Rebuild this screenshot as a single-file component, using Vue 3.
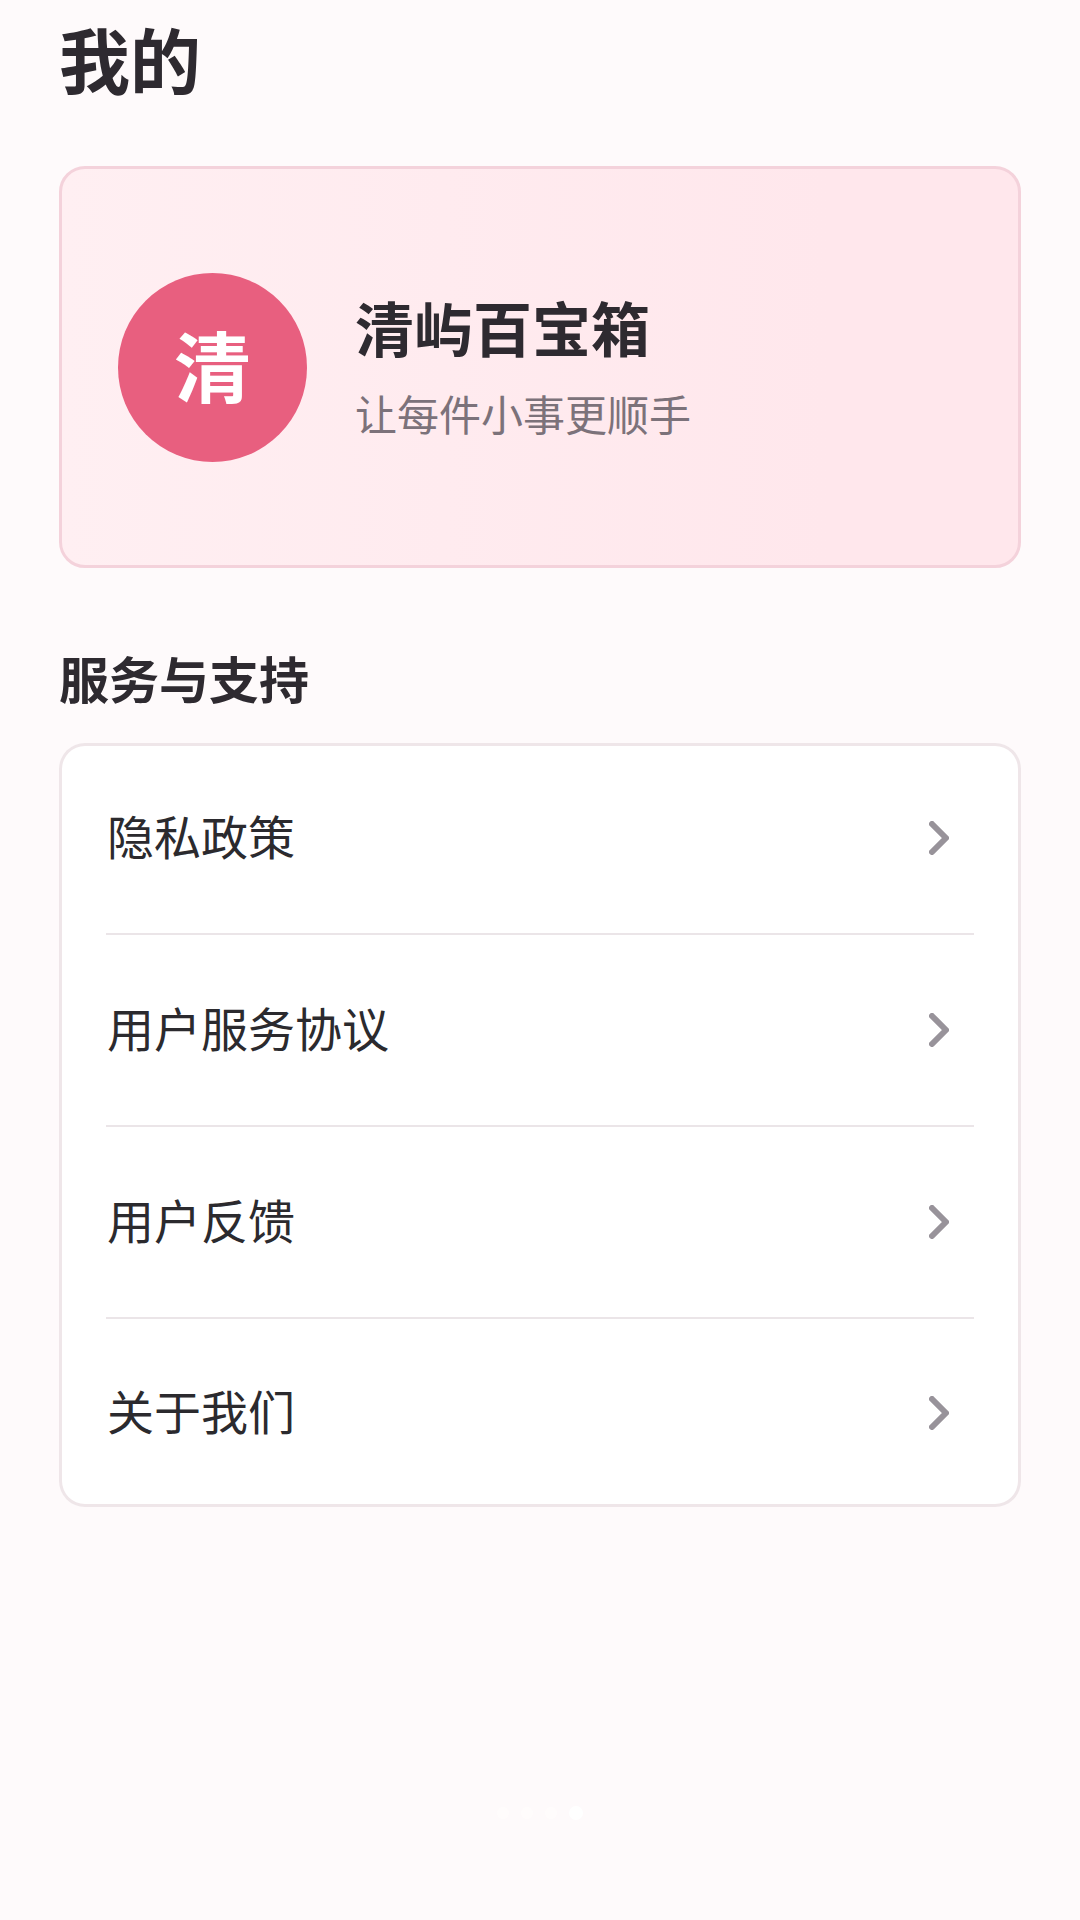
<script setup>
const links = ['隐私政策', '用户服务协议', '用户反馈', '关于我们']
const pages = 4
</script>

<template>
  <main class="page">
    <h1 class="title">我的</h1>

    <section class="profile">
      <div class="avatar">清</div>
      <div class="about">
        <h2 class="name">清屿百宝箱</h2>
        <p class="slogan">让每件小事更顺手</p>
      </div>
    </section>

    <h2 class="heading">服务与支持</h2>
    <nav class="list">
      <a v-for="link in links" :key="link" class="row" href="#">
        <span class="label">{{ link }}</span>
        <svg class="chevron" viewBox="0 0 20 34" aria-hidden="true">
          <path d="M3 3 L17 17 L3 31" />
        </svg>
      </a>
    </nav>

    <div class="dots" aria-hidden="true">
      <span v-for="n in pages" :key="n" class="dot" :class="{ active: n === pages }"></span>
    </div>
  </main>
</template>

<style>
body {
  margin: 0;
  background: #fefafb;
}
</style>

<style scoped>
.page {
  box-sizing: border-box;
  min-height: 100vh;
  padding: 7px 59px 100px;
  display: flex;
  flex-direction: column;
  color: #2e2a30;
  font-family: "Noto Sans CJK SC", sans-serif;
}

h1,
h2,
p {
  margin: 0;
}

.title {
  margin-bottom: 59px;
  font-size: 71px;
  line-height: 100px;
  font-weight: 700;
}

.profile {
  box-sizing: border-box;
  min-height: 402px;
  padding: 56px;
  display: flex;
  align-items: center;
  gap: 48px;
  border: 3px solid #f4d2db;
  border-radius: 26px;
  background: linear-gradient(90deg, #ffeff2, #ffe7ec 80%);
}

.avatar {
  box-sizing: border-box;
  flex: none;
  width: 189px;
  height: 189px;
  padding-bottom: 6px;
  display: flex;
  align-items: center;
  justify-content: center;
  border-radius: 50%;
  background: #e85f7f;
  color: #fff;
  font-size: 77px;
  font-weight: 700;
  line-height: 100px;
}

.about {
  display: flex;
  flex-direction: column;
  gap: 20px;
}

.name {
  font-size: 59px;
  line-height: 72px;
  font-weight: 700;
}

.slogan {
  color: #7c727a;
  font-size: 42px;
  line-height: 60px;
}

.heading {
  margin: 73px 0 30px;
  font-size: 50px;
  line-height: 72px;
  font-weight: 700;
}

.list {
  padding: 0 47px;
  border-radius: 26px;
  background: #fff;
  box-shadow: inset 0 0 0 3px #efe6e9;
}

.row {
  box-sizing: border-box;
  height: 192px;
  padding: 0 25px 0 1px;
  display: flex;
  align-items: center;
  justify-content: space-between;
  border-bottom: 2px solid #ebe5e8;
  color: #2b2a2e;
  font-size: 47px;
  line-height: 72px;
  text-decoration: none;
}

.row:last-child {
  height: 188px;
  border-bottom: none;
}

.label {
  padding-bottom: 6px;
}

.chevron {
  width: 20px;
  height: 34px;
  fill: none;
  stroke: #98939a;
  stroke-width: 6;
  stroke-linecap: round;
  stroke-linejoin: round;
}

.dots {
  margin-top: auto;
  display: flex;
  align-items: center;
  justify-content: center;
  gap: 12px;
}

.dot {
  width: 12px;
  height: 12px;
  border-radius: 50%;
  background: #fffcfc;
}

.dot.active {
  width: 14px;
  height: 14px;
  background: #fff;
}
</style>
